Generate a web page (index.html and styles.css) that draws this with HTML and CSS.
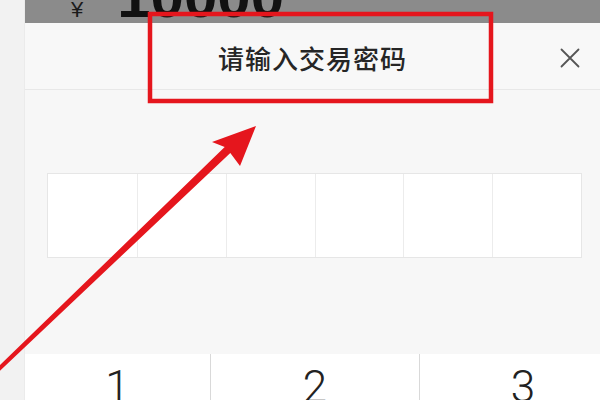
FILE: index.html
```html
<!DOCTYPE html>
<html lang="zh-CN">
<head>
<meta charset="utf-8">
<title>请输入交易密码</title>
<link rel="stylesheet" href="styles.css">
</head>
<body>
<div class="screen">
  <aside class="gutter"></aside>
  <main class="main">
    <div class="amount-bar">
      <span class="currency">¥</span><span class="amount">10000</span>
    </div>
    <section class="sheet">
      <header class="sheet-head">
        <span class="spacer"></span>
        <h1 class="title">请输入交易密码</h1>
        <button class="close" aria-label="关闭">
          <svg viewBox="0 0 20 20" width="20" height="20"><path d="M1.5 1.5 L18.5 18.5 M18.5 1.5 L1.5 18.5" stroke="#555" stroke-width="1.8" fill="none" stroke-linecap="round"/></svg>
        </button>
      </header>
      <div class="pwd-wrap">
        <div class="pwd">
          <div class="cell"></div><div class="cell"></div><div class="cell"></div>
          <div class="cell"></div><div class="cell"></div><div class="cell"></div>
        </div>
      </div>
      <div class="keypad">
        <div class="key">1</div><div class="key">2</div><div class="key">3</div>
        <div class="key">4</div><div class="key">5</div><div class="key">6</div>
        <div class="key">7</div><div class="key">8</div><div class="key">9</div>
        <div class="key"></div><div class="key">0</div><div class="key"></div>
      </div>
    </section>
  </main>
  <svg class="annot" viewBox="0 0 600 400" width="600" height="400">
    <rect x="150" y="14" width="341" height="87" fill="none" stroke="#e5161d" stroke-width="4.5"/>
    <polygon points="-11.4,376.1 224.7,147.1 212,142 256,126 240,166 230.3,152.9 -8.6,378.9" fill="#e5161d"/>
  </svg>
</div>
</body>
</html>
```
FILE: styles.css
```css
html, body {
  margin: 0;
  width: 600px;
  height: 400px;
  overflow: hidden;
  background: #f3f3f3;
}

.screen {
  position: relative;
  display: flex;
  width: 600px;
  height: 400px;
  overflow: hidden;
  font-family: "Liberation Sans", "Noto Sans CJK SC", sans-serif;
}

.gutter {
  width: 25px;
  flex: none;
  background: #f2f2f2;
  box-shadow: inset -1px 0 0 #ebebeb;
}

.main {
  flex: 1;
  min-width: 0;
  display: flex;
  flex-direction: column;
  background: #f7f7f7;
}

.amount-bar {
  height: 23px;
  flex: none;
  background: #8b8b8b;
  display: flex;
  align-items: flex-end;
  overflow: hidden;
  padding-left: 46px;
}

.currency {
  font-size: 22px;
  line-height: 22px;
  color: #1a1a1a;
  margin-bottom: 2px;
}

.amount {
  font-weight: bold;
  font-size: 60px;
  line-height: 60px;
  color: #111;
  margin-left: 34px;
  margin-bottom: -4px;
}

.sheet {
  flex: 1;
  display: flex;
  flex-direction: column;
  min-height: 0;
}

.sheet-head {
  height: 66px;
  flex: none;
  border-bottom: 1px solid #e8e8e8;
  display: grid;
  grid-template-columns: 1fr auto 1fr;
  align-items: center;
  background: #f8f8f8;
}

.title {
  margin: 0;
  padding-top: 4px;
  font-family: "Noto Sans CJK SC", sans-serif;
  font-weight: 500;
  font-size: 26px;
  line-height: 30px;
  letter-spacing: 1px;
  color: #262626;
}

.close {
  justify-self: end;
  margin-right: 20px;
  margin-top: 3px;
  padding: 0;
  border: 0;
  background: none;
  width: 20px;
  height: 20px;
  display: flex;
}

.pwd-wrap {
  flex: none;
  padding: 83px 18px 0 22px;
}

.pwd {
  display: grid;
  grid-template-columns: repeat(6, 1fr);
  height: 83px;
  background: #fff;
  border: 1px solid #e6e6e6;
}

.cell + .cell {
  border-left: 1px solid #ececec;
}

.keypad {
  margin-top: 96px;
  display: grid;
  grid-template-columns: 185px 208px 206px;
  grid-auto-rows: 67px;
  gap: 1px;
  background: #d9d9d9;
}

.key {
  background: #fff;
  text-align: center;
  font-family: Roboto, "Liberation Sans", sans-serif;
  font-weight: 300;
  font-size: 44px;
  line-height: 67px;
  color: #222;
}

.annot {
  position: absolute;
  left: 0;
  top: 0;
  pointer-events: none;
}
```
